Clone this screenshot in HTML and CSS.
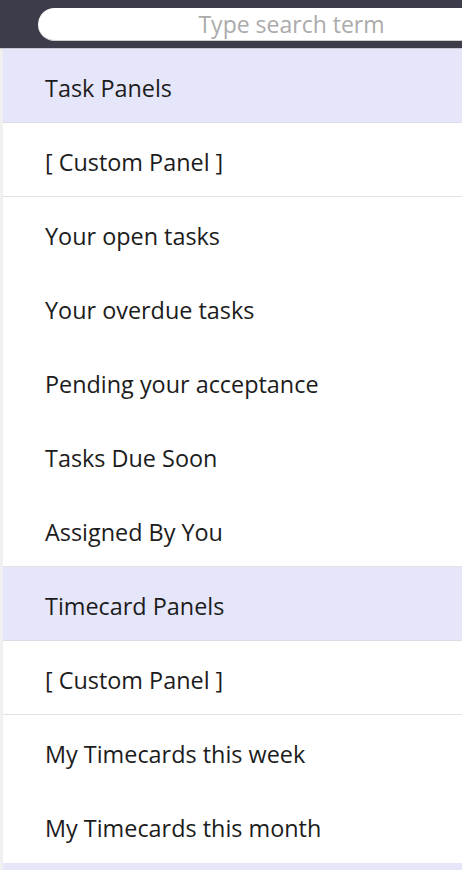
FILE: index.html
```html
<!DOCTYPE html>
<html>
<head>
<meta charset="utf-8">
<link rel="stylesheet" href="styles.css">
</head>
<body>
<div class="page">
  <header class="topbar">
    <input class="search" type="text" placeholder="Type search term">
  </header>
  <ul class="list">
    <li class="row group">Task Panels</li>
    <li class="row sep">[ Custom Panel ]</li>
    <li class="row">Your open tasks</li>
    <li class="row">Your overdue tasks</li>
    <li class="row">Pending your acceptance</li>
    <li class="row">Tasks Due Soon</li>
    <li class="row sep">Assigned By You</li>
    <li class="row group">Timecard Panels</li>
    <li class="row sep">[ Custom Panel ]</li>
    <li class="row">My Timecards this week</li>
    <li class="row">My Timecards this month</li>
    <li class="row group"></li>
  </ul>
</div>
</body>
</html>
```
FILE: styles.css
```css
html, body {
  margin: 0;
  padding: 0;
  overflow: hidden;
  background: #ffffff;
  font-family: "Open Sans", "Noto Sans", sans-serif;
}
.page {
  width: 462px;
  height: 870px;
  overflow: hidden;
}
.topbar {
  background: #3d3c4b;
  border-bottom: 1px solid #c9c9d3;
  padding: 8px 0 0 38px;
  height: 40px;
  overflow: hidden;
  display: flex;
  align-items: flex-start;
}
.search {
  flex: none;
  width: 507px;
  height: 33px;
  box-sizing: border-box;
  border: none;
  border-bottom: 1px solid #d0d0d0;
  border-radius: 17px 0 0 17px;
  background: #ffffff;
  font-family: "Open Sans", "Noto Sans", sans-serif;
  font-size: 23px;
  text-align: center;
  padding: 0;
  outline: none;
  color: #222;
}
.search::placeholder {
  color: #ababab;
}
.list {
  list-style: none;
  margin: 0;
  padding: 0;
  border-left: 3px solid #f0f0f0;
}
.row {
  padding: 5px 0 0 42px;
  height: 68px;
  line-height: 68px;
  font-size: 23.4px;
  color: #1c1c1c;
  border-bottom: 1px solid transparent;
  white-space: nowrap;
}
.row.group {
  background: #e6e6fa;
  border-bottom-color: #dcdce4;
}
.row.sep {
  border-bottom-color: #e2e2e2;
}
```
